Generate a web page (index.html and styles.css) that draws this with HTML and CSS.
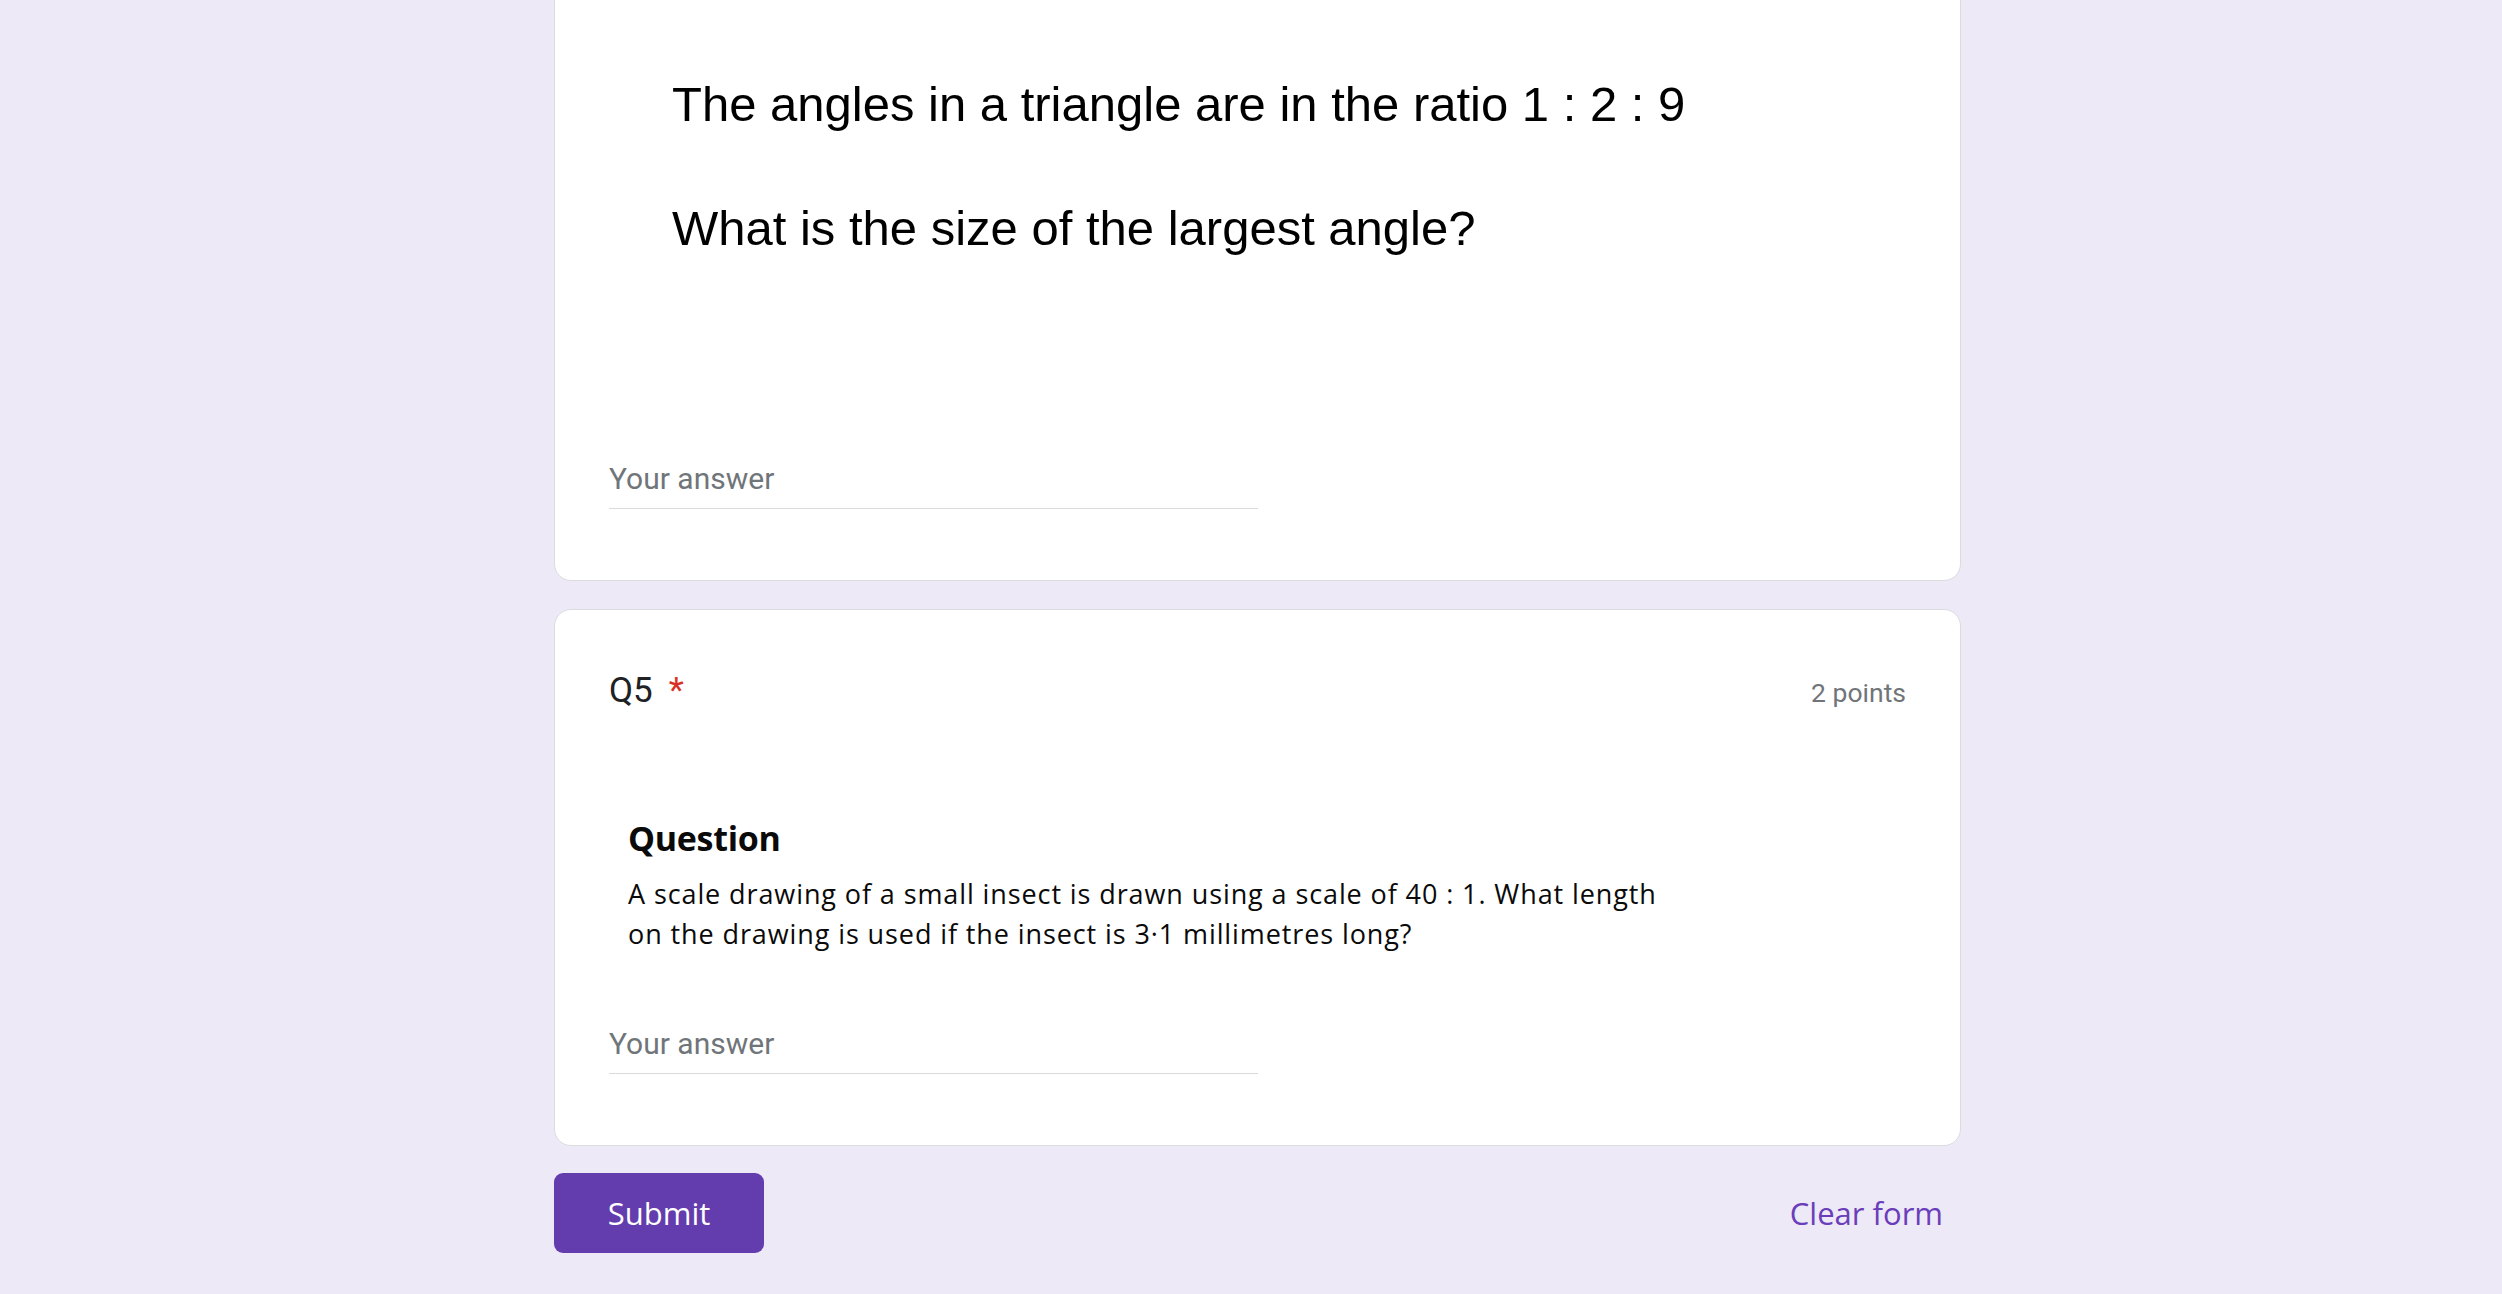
FILE: index.html
```html
<!DOCTYPE html>
<html lang="en">
<head>
<meta charset="utf-8">
<title>Quiz</title>
<link rel="stylesheet" href="styles.css">
</head>
<body>
<main class="page">
  <section class="card">
    <div class="img-q1">
      <div class="img-line">The angles in a triangle are in the ratio 1 : 2 : 9</div>
      <div class="img-line">What is the size of the largest angle?</div>
    </div>
    <div class="answer answer-first">Your answer</div>
  </section>

  <section class="card">
    <div class="q-head">
      <div class="q-title">Q5<span class="req">*</span></div>
      <div class="q-points">2 points</div>
    </div>
    <div class="img-q2">
      <div class="img2-title">Question</div>
      <div class="img2-body">A scale drawing of a small insect is drawn using a scale of 40 : 1. What length<br>on the drawing is used if the insect is 3·1 millimetres long?</div>
    </div>
    <div class="answer answer-second">Your answer</div>
  </section>

  <div class="actions">
    <button class="submit" type="button">Submit</button>
    <button class="clear" type="button">Clear form</button>
  </div>
</main>
</body>
</html>
```

FILE: styles.css
```css
html, body {
  margin: 0;
  height: 100%;
}

body {
  background: #ede9f6;
  padding-left: 13px;
  box-sizing: border-box;
  overflow: hidden;
  font-family: Roboto, "Liberation Sans", Arial, sans-serif;
}

.page {
  width: 1407px;
  margin: -39px auto 0;
  display: flex;
  flex-direction: column;
}

.card {
  box-sizing: border-box;
  width: 100%;
  background: #ffffff;
  border: 1px solid #dadce0;
  border-radius: 17px;
  padding: 54px 54px 71px;
  margin-bottom: 28px;
}

.card:last-of-type {
  margin-bottom: 0;
}

/* Q4 image */
.img-q1 {
  padding-top: 26px;
  padding-left: 63px;
  font-family: "Liberation Sans", Arial, sans-serif;
  font-size: 49px;
  line-height: 124px;
  color: #000000;
  white-space: nowrap;
}

/* answer field */
.answer {
  box-sizing: border-box;
  width: 50%;
  height: 52px;
  line-height: 44px;
  border-bottom: 1px solid #d9dadd;
  font-family: Roboto, "Liberation Sans", sans-serif;
  font-size: 30px;
  color: #70757a;
}

.answer-first {
  margin-top: 167px;
}

.answer-second {
  margin-top: 68px;
}

/* Q5 header */
.q-head {
  display: flex;
  justify-content: space-between;
  align-items: baseline;
}

.q-title {
  font-family: Roboto, "Liberation Sans", sans-serif;
  font-size: 35px;
  line-height: 53px;
  color: #202124;
}

.req {
  color: #d93025;
  padding-left: 16px;
}

.q-points {
  font-family: Roboto, "Liberation Sans", sans-serif;
  font-size: 26.5px;
  color: #70757a;
}

/* Q5 image */
.img-q2 {
  margin-top: 98px;
  padding-left: 19px;
  font-family: "Open Sans", "Noto Sans", sans-serif;
  color: #0a0a0a;
  white-space: nowrap;
}

.img2-title {
  font-size: 34px;
  font-weight: 700;
  line-height: 46px;
  letter-spacing: -0.3px;
}

.img2-body {
  margin-top: 13px;
  font-size: 27px;
  font-weight: 500;
  line-height: 40px;
  letter-spacing: 0.9px;
}

/* actions */
.actions {
  margin-top: 27px;
  display: flex;
  justify-content: space-between;
  align-items: center;
}

.submit {
  width: 210px;
  height: 80px;
  border: none;
  border-radius: 9px;
  background: #633cae;
  color: #ffffff;
  font-family: "Open Sans", "Noto Sans", sans-serif;
  font-weight: 500;
  font-size: 31px;
  padding: 0;
  cursor: pointer;
}

.clear {
  border: none;
  background: transparent;
  color: #6a3dba;
  font-family: "Open Sans", "Noto Sans", sans-serif;
  font-weight: 500;
  font-size: 31px;
  padding: 0 18px;
  height: 80px;
  cursor: pointer;
}
```
